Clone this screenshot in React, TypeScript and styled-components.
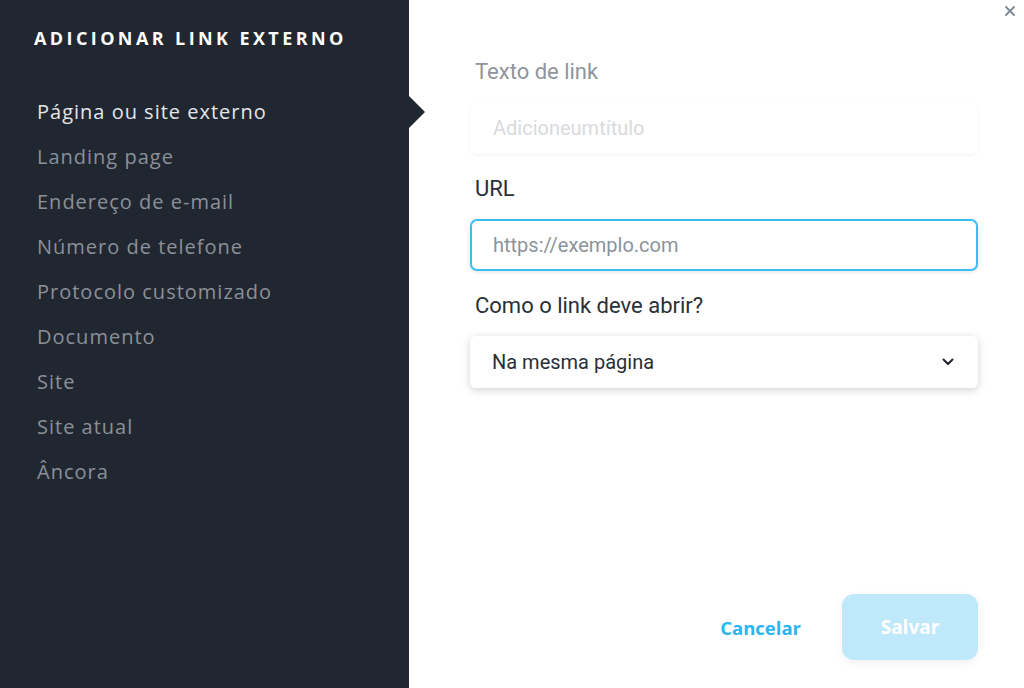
import * as React from "react";
import styled, { createGlobalStyle } from "styled-components";

let menuItems = [
  "Página ou site externo",
  "Landing page",
  "Endereço de e-mail",
  "Número de telefone",
  "Protocolo customizado",
  "Documento",
  "Site",
  "Site atual",
  "Âncora",
];

let App = () => {
  return (
    <React.Fragment>
      <GlobalStyle />
      <Layout>
        <Sidebar>
          <Title>Adicionar link externo</Title>
          <Menu>
            {menuItems.map((item, i) => (
              <MenuItem key={item} active={i === 0}>
                {item}
              </MenuItem>
            ))}
          </Menu>
        </Sidebar>
        <Content>
          <CloseButton aria-label="Fechar">
            <svg width="12" height="12" viewBox="0 0 12 12">
              <path
                d="M2 2 L10 10 M10 2 L2 10"
                stroke="#7d8894"
                strokeWidth="1.8"
                strokeLinecap="round"
              />
            </svg>
          </CloseButton>
          <Form>
            <Field>
              <Label disabled>Texto de link</Label>
              <TextInput placeholder="Adicioneumtítulo" disabled />
            </Field>
            <Field>
              <Label>URL</Label>
              <TextInput placeholder="https://exemplo.com" focused />
            </Field>
            <Field>
              <Label>Como o link deve abrir?</Label>
              <Select>
                <span>Na mesma página</span>
                <svg width="12" height="8" viewBox="0 0 12 8">
                  <path
                    d="M1.5 1.5 L6 6 L10.5 1.5"
                    fill="none"
                    stroke="#1f2329"
                    strokeWidth="2"
                    strokeLinecap="round"
                    strokeLinejoin="round"
                  />
                </svg>
              </Select>
            </Field>
          </Form>
          <Actions>
            <CancelButton>Cancelar</CancelButton>
            <SaveButton disabled>Salvar</SaveButton>
          </Actions>
        </Content>
      </Layout>
    </React.Fragment>
  );
};

let GlobalStyle = createGlobalStyle`
  html, body {
    margin: 0;
    padding: 0;
    background: #ffffff;
  }
  * {
    box-sizing: border-box;
  }
`;

let Layout = styled.div`
  display: flex;
  width: 1024px;
  height: 688px;
  overflow: hidden;
`;

let Sidebar = styled.aside`
  width: 409px;
  flex-shrink: 0;
  background-color: #212731;
  padding: 26px 0 0 34px;
  font-family: "Open Sans", "Noto Sans", sans-serif;
`;

let Title = styled.h1`
  margin: 0;
  font-size: 18px;
  font-weight: 700;
  text-transform: uppercase;
  letter-spacing: 3.4px;
  color: #ffffff;
  line-height: 24px;
`;

let Menu = styled.ul`
  list-style: none;
  margin: 48px 0 0;
  padding: 0 0 0 3px;
  display: flex;
  flex-direction: column;
  gap: 17px;
`;

interface MenuItemProps {
  readonly active?: boolean;
}

let MenuItem = styled.li<MenuItemProps>`
  position: relative;
  font-size: 20px;
  line-height: 28px;
  letter-spacing: 1px;
  color: ${props => (props.active ? "#e4e6e9" : "#8b9099")};

  &::after {
    content: ${props => (props.active ? '""' : "none")};
    position: absolute;
    left: 372px;
    top: -2px;
    border-top: 16px solid transparent;
    border-bottom: 16px solid transparent;
    border-left: 16px solid #212731;
  }
`;

let Content = styled.main`
  position: relative;
  flex: 1;
  display: flex;
  flex-direction: column;
  padding: 57px 46px 28px 61px;
  font-family: Roboto, "Liberation Sans", sans-serif;
`;

let CloseButton = styled.button`
  position: absolute;
  top: 1px;
  right: 4px;
  width: 20px;
  height: 20px;
  padding: 0;
  border: none;
  background: transparent;
  display: flex;
  align-items: center;
  justify-content: center;
`;

let Form = styled.div`
  display: flex;
  flex-direction: column;
  gap: 20px;
`;

let Field = styled.div`
  display: flex;
  flex-direction: column;
  gap: 15px;
`;

interface LabelProps {
  readonly disabled?: boolean;
}

let Label = styled.label<LabelProps>`
  padding-left: 5px;
  font-size: 22px;
  line-height: 30px;
  color: ${props => (props.disabled ? "#8f949b" : "#2a2f37")};
`;

interface TextInputProps {
  readonly focused?: boolean;
}

let TextInput = styled.input<TextInputProps>`
  height: 52px;
  width: 100%;
  padding: 0 21px;
  border-radius: 7px;
  font-family: inherit;
  font-size: 20px;
  color: #2a2f37;
  background: #ffffff;
  outline: none;
  border: 2px solid ${props => (props.focused ? "#3bbdf2" : "#ffffff")};
  box-shadow: ${props =>
    props.focused
      ? "0 1px 4px rgba(0, 0, 0, 0.12)"
      : "0 1px 4px rgba(0, 0, 0, 0.05)"};

  &::placeholder {
    color: #8c939b;
  }

  &:disabled {
    background: #ffffff;
  }

  &:disabled::placeholder {
    color: #d8dadd;
  }
`;

let Select = styled.div`
  height: 52px;
  display: flex;
  align-items: center;
  justify-content: space-between;
  padding: 0 24px 0 22px;
  border-radius: 6px;
  background: #ffffff;
  box-shadow: 0 2px 8px rgba(0, 0, 0, 0.18);
  font-size: 20px;
  color: #2a2f37;
`;

let Actions = styled.div`
  margin-top: auto;
  display: flex;
  justify-content: flex-end;
  align-items: center;
  gap: 41px;
`;

let CancelButton = styled.button`
  border: none;
  background: transparent;
  padding: 0;
  font-family: "Open Sans", "Noto Sans", sans-serif;
  font-size: 18.5px;
  font-weight: 700;
  color: #2bb6f2;
`;

let SaveButton = styled.button`
  width: 136px;
  height: 66px;
  border: none;
  border-radius: 12px;
  background: #bfe9fb;
  box-shadow: 0 3px 10px rgba(0, 0, 0, 0.06);
  font-family: "Open Sans", "Noto Sans", sans-serif;
  font-size: 19px;
  font-weight: 700;
  color: #ffffff;
`;

export default App;
